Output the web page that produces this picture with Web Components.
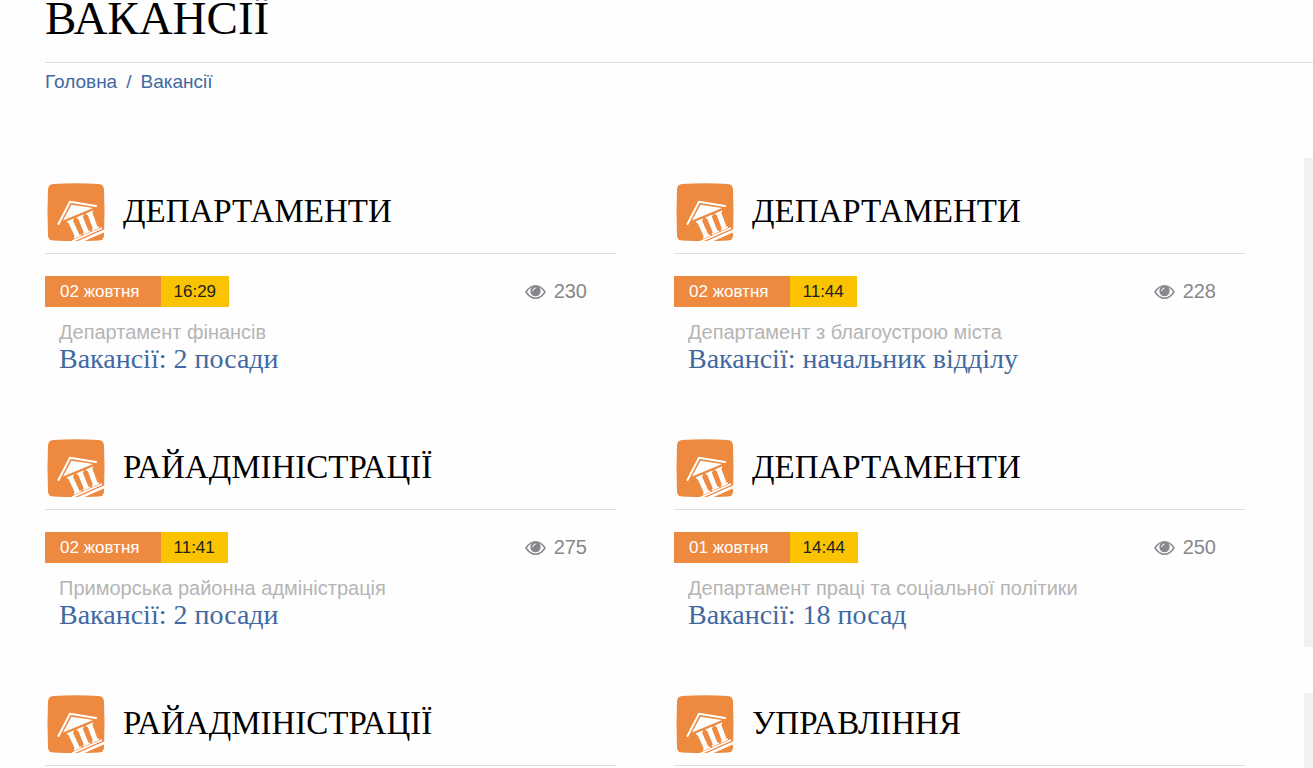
<!DOCTYPE html>
<html lang="uk">
<head>
<meta charset="utf-8">
<title>Вакансії</title>
<style>
html, body { margin: 0; height: 100%; }
body { background: #fefefe; overflow: hidden; color: #000; font-family: "Liberation Sans", Arial, sans-serif; }
</style>
</head>
<body>
<vacancies-page>
  <page-header slot="header" heading="ВАКАНСІЇ"></page-header>
  <vacancy-card category="ДЕПАРТАМЕНТИ" date="02 жовтня" time="16:29" views="230" office="Департамент фінансів">Вакансії: 2 посади</vacancy-card>
  <vacancy-card category="ДЕПАРТАМЕНТИ" date="02 жовтня" time="11:44" views="228" office="Департамент з благоустрою міста">Вакансії: начальник відділу</vacancy-card>
  <vacancy-card category="РАЙАДМІНІСТРАЦІЇ" date="02 жовтня" time="11:41" views="275" office="Приморська районна адміністрація">Вакансії: 2 посади</vacancy-card>
  <vacancy-card category="ДЕПАРТАМЕНТИ" date="01 жовтня" time="14:44" views="250" office="Департамент праці та соціальної політики">Вакансії: 18 посад</vacancy-card>
  <vacancy-card category="РАЙАДМІНІСТРАЦІЇ"></vacancy-card>
  <vacancy-card category="УПРАВЛІННЯ"></vacancy-card>
</vacancies-page>
<script>
class VacanciesPage extends HTMLElement {
  constructor() {
    super();
    this.attachShadow({ mode: 'open' }).innerHTML = `
      <style>
        :host { display: block; height: 100%; overflow: hidden; }
        .content { display: grid; grid-template-columns: minmax(0, 1fr) 9px; gap: 59px; padding-left: 45px; margin-top: 48px; }
        main { display: grid; grid-template-columns: 1fr 1fr; column-gap: 58px; align-content: start; }
        aside { display: flex; flex-direction: column; gap: 46px; }
        aside div { background: #f1f1f1; height: 489px; }
      </style>
      <slot name="header"></slot>
      <div class="content"><main><slot></slot></main><aside><div></div><div></div></aside></div>`;
  }
}
class PageHeader extends HTMLElement {
  connectedCallback() {
    this.attachShadow({ mode: 'open' }).innerHTML = `
      <style>
        :host { display: block; padding-left: 45px; }
        h1 { margin: 0; padding-bottom: 25px; border-bottom: 1px solid #dcdcdc; font: 400 47px/37px "Liberation Serif", serif; }
        nav { display: flex; gap: 9px; padding-top: 7px; color: #4169a1; font-size: 19px; line-height: 24px; height: 40px; }
        a { color: inherit; text-decoration: none; }
      </style>
      <h1>${this.getAttribute('heading')}</h1>
      <nav><a href="#">Головна</a><span>/</span><a href="#">Вакансії</a></nav>`;
  }
}
class CategoryIcon extends HTMLElement {
  constructor() {
    super();
    this.attachShadow({ mode: 'open' }).innerHTML = `
      <style>:host { display: block; width: 60px; height: 60px; } svg { display: block; }</style>
      <svg width="60" height="60" viewBox="0 0 60 60" aria-hidden="true">
        <path fill="#ed8a40" d="M7 2Q30 .5 53 2Q57.500 2.500 58 7Q59 30 58 54Q57.500 58 53 58.500Q30 59.500 7 58.500Q2.500 58 2 54Q1 30 2 7Q2.500 2.500 7 2Z"/>
        <path fill="#fff" d="M25.500 22.800 47 26 17 38.500Z"/>
        <g fill="none" stroke="#fff">
          <path stroke-width="2" stroke-linecap="round" stroke-linejoin="round" d="M12.500 42 24 19.800 50 24"/>
          <path stroke-width="5" d="M24.200 38.500 31.500 54.500M34 34.500 40.500 50.500M43.500 30.500 49.500 46.500"/>
          <path stroke-width="1.600" d="M21 40.300 27.700 37.300M30.800 36.200 37.500 33.200M40.300 32.200 47 29.200M28 56 35 53M37 52 44 49M46 48 53 45"/>
          <path stroke-width="1.800" d="M26 59.300 56 46"/>
          <path stroke-width="2.600" d="M32 60.500 58.500 48.800"/>
        </g>
      </svg>`;
  }
}
class ViewCount extends HTMLElement {
  constructor() {
    super();
    this.attachShadow({ mode: 'open' }).innerHTML = `
      <style>
        :host { display: flex; align-items: center; gap: 8px; color: #86888b; font-size: 20px; line-height: 31px; }
        svg { display: block; }
      </style>
      <svg width="21" height="16" viewBox="0 0 21 16" aria-hidden="true">
        <path d="M1 8Q5 1.700 10.500 1.700T20 8Q16 14.200 10.500 14.200T1 8Z" fill="none" stroke="currentColor" stroke-width="1.500"/>
        <circle cx="10.500" cy="7" r="5.200" fill="currentColor"/>
        <path d="M7.700 6.800Q7.900 4.300 10.300 4" fill="none" stroke="#fff" stroke-width="1" stroke-linecap="round"/>
      </svg><slot></slot>`;
  }
}
class VacancyCard extends HTMLElement {
  connectedCallback() {
    const v = name => this.getAttribute(name);
    const details = v('date') ? `
      <div class="meta"><time class="date">${v('date')}</time><time class="hour">${v('time')}</time><view-count>${v('views')}</view-count></div>
      <div class="text"><p>${v('office')}</p><a href="#"><slot></slot></a></div>` : '';
    this.attachShadow({ mode: 'open' }).innerHTML = `
      <style>
        :host { display: block; min-height: 256px; }
        header { display: flex; gap: 17px; padding: 24px 0 11px 1px; border-bottom: 1px solid #dedede; }
        h2 { margin: 0; font: 400 33px/58px "Liberation Serif", serif; }
        .meta { display: flex; margin-top: 22px; font-size: 17px; line-height: 31px; }
        .date { background: #ed8a40; color: #fff; padding: 0 21px 0 15px; }
        .hour { background: #f9c300; color: #222; padding: 0 13px; }
        view-count { margin-left: auto; margin-right: 29px; }
        .text { padding: 13px 14px 0; }
        p { margin: 0; color: #b5b5b5; font-size: 20px; line-height: 24px; }
        a { display: block; color: #4169a1; text-decoration: none; font: 28px/30px Georgia, "Liberation Serif", serif; }
      </style>
      <header><category-icon></category-icon><h2>${v('category')}</h2></header>${details}`;
  }
}
customElements.define('category-icon', CategoryIcon);
customElements.define('view-count', ViewCount);
customElements.define('page-header', PageHeader);
customElements.define('vacancy-card', VacancyCard);
customElements.define('vacancies-page', VacanciesPage);
</script>
</body>
</html>
